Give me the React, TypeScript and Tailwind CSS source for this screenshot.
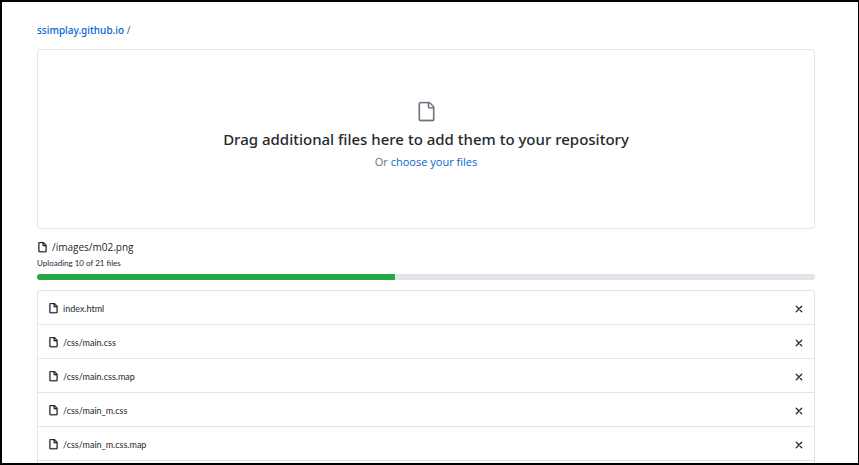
import { useState } from 'react';
import { clsx } from 'clsx';

const TOTAL_FILES = 21;
const UPLOADED_FILES = 10;

const initialFiles = [
  'index.html',
  '/css/main.css',
  '/css/main.css.map',
  '/css/main_m.css',
  '/css/main_m.css.map',
];

function FileIcon({ className }: { className?: string }) {
  return (
    <svg viewBox="0 0 16 16" fill="currentColor" stroke="currentColor" strokeWidth="0.4" aria-hidden="true" className={clsx('shrink-0', className)}>
      <path
        fillRule="evenodd"
        d="M3.75 1.5a.25.25 0 00-.25.25v11.5c0 .138.112.25.25.25h8.5a.25.25 0 00.25-.25V6H9.75A1.75 1.75 0 018 4.25V1.5H3.75zm5.75.56v2.19c0 .138.112.25.25.25h2.19L9.5 2.06zM2 1.75C2 .784 2.784 0 3.75 0h5.086c.464 0 .909.184 1.237.513l3.414 3.414c.329.328.513.773.513 1.237v8.086A1.75 1.75 0 0112.25 15h-8.5A1.75 1.75 0 012 13.25V1.75z"
      />
    </svg>
  );
}

function LargeFileIcon({ className }: { className?: string }) {
  return (
    <svg viewBox="0 0 24 24" fill="currentColor" stroke="currentColor" strokeWidth="0.3" aria-hidden="true" className={className}>
      <path
        fillRule="evenodd"
        d="M5 2.5a.5.5 0 00-.5.5v18a.5.5 0 00.5.5h14a.5.5 0 00.5-.5V8.5h-4a2 2 0 01-2-2v-4H5zm10 0v4a.5.5 0 00.5.5h4a.5.5 0 00-.146-.336l-4.018-4.018A.5.5 0 0015 2.5zM3 3a2 2 0 012-2h9.982a2 2 0 011.414.586l4.018 4.018A2 2 0 0121 7.018V21a2 2 0 01-2 2H5a2 2 0 01-2-2V3z"
      />
    </svg>
  );
}

function CloseIcon() {
  return (
    <svg viewBox="0 0 12 12" fill="none" stroke="currentColor" strokeWidth="1.3" strokeLinecap="round" aria-hidden="true" className="size-3">
      <path d="M3.3 3.3l5.4 5.4M8.7 3.3l-5.4 5.4" />
    </svg>
  );
}

export default function App() {
  const [files, setFiles] = useState(initialFiles);

  const removeFile = (name: string) => {
    setFiles(files.filter((file) => file !== name));
  };

  return (
    <div className="flex h-screen flex-col overflow-hidden border-2 border-r border-black bg-white pt-5 pr-[43px] pl-[35px] font-['Segoe_UI','Open_Sans',sans-serif] text-[#24292e]">
      {/* Breadcrumb */}
      <nav className="font-['Noto_Sans',sans-serif] text-[10px] leading-4 text-[#586069]">
        <a href="#" className="font-medium text-[#0366d6]">ssimplay.github.io</a>
        <span> /</span>
      </nav>

      {/* Drop zone */}
      <section className="mt-[11px] flex h-[180px] shrink-0 flex-col items-center rounded border border-[#e1e4e8] pt-[51px]">
        <LargeFileIcon className="size-[21px] text-[#6a737d]" />
        <h2 className="mt-[7px] font-['Noto_Sans',sans-serif] text-[15px] leading-5 font-medium">
          Drag additional files here to add them to your repository
        </h2>
        <p className="mt-[5px] text-[11px] leading-4 text-[#6a737d]">
          Or <a href="#" className="text-[#0366d6]">choose your files</a>
        </p>
      </section>

      {/* Upload progress */}
      <section className="mt-2.5 shrink-0">
        <div className="flex items-center gap-1 text-[10px] leading-4">
          <FileIcon className="size-[11px]" />
          <span>/images/m02.png</span>
        </div>
        <p className="mt-0.5 font-['Lato',sans-serif] text-[8px] leading-3">
          Uploading {UPLOADED_FILES} of {TOTAL_FILES} files
        </p>
        <div className="mt-[5px] h-1.5 overflow-hidden rounded-md bg-[#e1e4e8]">
          <div className="h-full w-[46%] bg-[#28a745]" />
        </div>
      </section>

      {/* File list */}
      <ul className="mt-2.5 min-h-0 flex-1 overflow-hidden rounded-t border border-b-0 border-[#e1e4e8]">
        {files.map((file) => (
          <li key={file} className="flex h-[34px] items-center gap-1 border-b border-[#e1e4e8] pt-0.5 pr-[9px] pl-2.5 font-['Lato',sans-serif] text-[9px]">
            <FileIcon className="size-[11px]" />
            <span className="flex-1">{file}</span>
            <button type="button" aria-label={`Remove ${file}`} onClick={() => removeFile(file)}>
              <CloseIcon />
            </button>
          </li>
        ))}
      </ul>
    </div>
  );
}
